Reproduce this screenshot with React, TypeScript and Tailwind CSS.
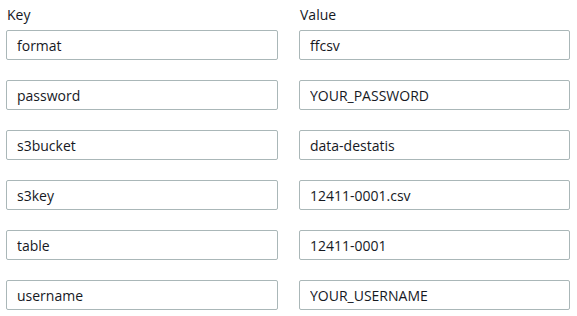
const rows = [
  { key: "format", value: "ffcsv" },
  { key: "password", value: "YOUR_PASSWORD" },
  { key: "s3bucket", value: "data-destatis" },
  { key: "s3key", value: "12411-0001.csv" },
  { key: "table", value: "12411-0001" },
  { key: "username", value: "YOUR_USERNAME" },
];

function Field({ value }: { value: string }) {
  return (
    <input
      readOnly
      value={value}
      className="h-[30px] w-full rounded-[2px] border border-[#aab7b8] bg-white px-[10px] text-[14px] text-[#16191f] outline-none"
    />
  );
}

export default function App() {
  return (
    <div
      className="w-[577px] h-[316px] bg-white text-[#16191f] pl-[6px] pr-[7px] pt-[5px]"
      style={{ fontFamily: '"Open Sans", "Noto Sans", sans-serif' }}
    >
      <div className="grid grid-cols-[272px_271px] gap-x-[21px]">
        <div className="text-[14px] leading-[20px] pl-[1px] mb-[5px]">Key</div>
        <div className="text-[14px] leading-[20px] pl-[1px] mb-[5px]">Value</div>
        {rows.map((r) => (
          <div key={r.key} className="contents">
            <div className="mb-[20px]">
              <Field value={r.key} />
            </div>
            <div className="mb-[20px]">
              <Field value={r.value} />
            </div>
          </div>
        ))}
      </div>
    </div>
  );
}
